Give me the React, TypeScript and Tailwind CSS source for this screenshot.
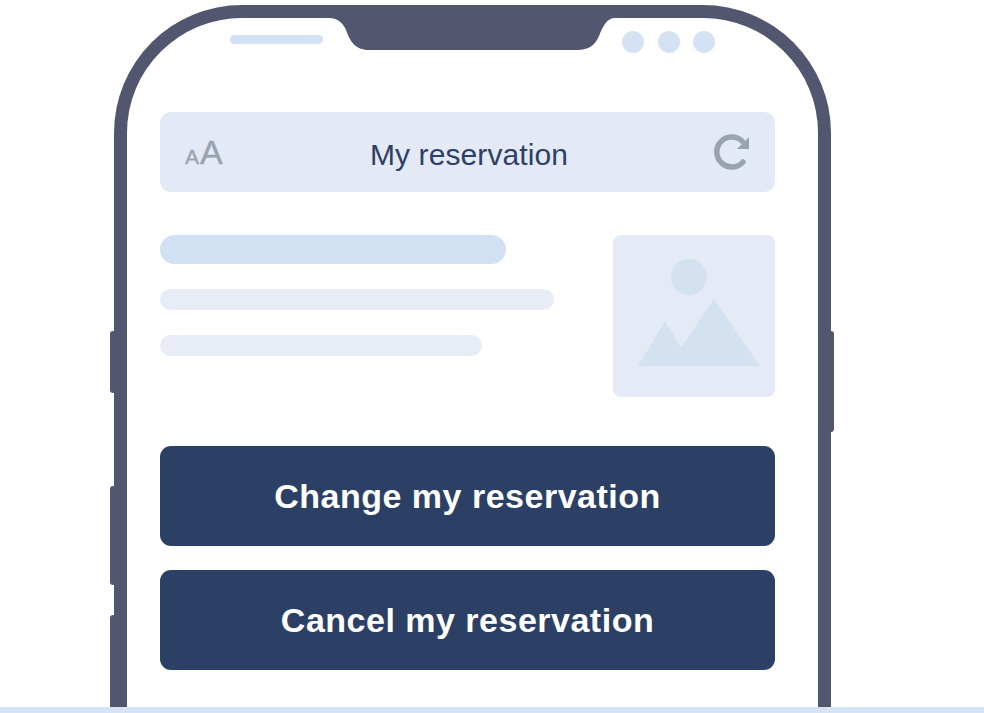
import React from 'react';

const App: React.FC = () => {
  return (
    <div className="relative h-[713px] w-[984px] overflow-hidden bg-white font-['Liberation_Sans',sans-serif] flex flex-col">
      <div className="flex-1 pt-[5px] pl-[114px]">
        {/* Phone body */}
        <div className="relative h-full w-[717px] rounded-t-[128px] border-[13px] border-b-0 border-[#53566f]">
          {/* Side buttons */}
          <div className="absolute -left-[17px] top-[313px] h-[62px] w-[4px] rounded-l-[3px] bg-[#53566f]" />
          <div className="absolute -left-[17px] top-[468px] h-[99px] w-[4px] rounded-l-[3px] bg-[#53566f]" />
          <div className="absolute -left-[17px] top-[597px] h-[92px] w-[4px] rounded-tl-[3px] bg-[#53566f]" />
          <div className="absolute -right-[16px] top-[313px] h-[101px] w-[3px] rounded-r-[3px] bg-[#53566f]" />

          {/* Notch */}
          <svg className="absolute left-[200px] -top-px" width="290" height="34" viewBox="0 -1 290 34">
            <path d="M0 -1 L0 0 L2 0 C11 0 16 5 19 12 C23 23 28 32 42 32 L250 32 C262 32 268 27 272 18 C276 8 280 0 288 0 L288 -1 Z" fill="#53566f" />
          </svg>

          <div className="flex h-full flex-col pl-[33px] pr-[43px]">
            {/* Status bar */}
            <div className="relative h-[94px] shrink-0">
              <div className="absolute left-[70px] top-[17px] h-[9px] w-[93px] rounded-full bg-[#d2e1f3]" />
              <div className="absolute left-[462px] top-[13px] flex gap-[13.5px]">
                <div className="h-[22px] w-[22px] rounded-full bg-[#d5e2f3]" />
                <div className="h-[22px] w-[22px] rounded-full bg-[#d5e2f3]" />
                <div className="h-[22px] w-[22px] rounded-full bg-[#d5e2f3]" />
              </div>
            </div>

            {/* Address bar */}
            <div className="flex h-[80px] w-[615px] shrink-0 items-center justify-between rounded-[11px] bg-[#e4eaf5] pl-[25px] pr-[24px]">
              <div className="flex w-[40px] items-baseline text-[#9aa3b1] [-webkit-text-stroke:0.4px_#9aa3b1]">
                <span className="text-[21px] leading-none">A</span>
                <span className="ml-px text-[34px] leading-none">A</span>
              </div>
              <span className="pt-[5px] text-[30px] leading-none tracking-[0.1px] text-[#2e4068]">My reservation</span>
              <svg className="translate-x-px translate-y-px" width="38" height="38" viewBox="0 0 38 38">
                <path d="M29 28 A15 15 0 1 1 28 7" fill="none" stroke="#9aa3b1" strokeWidth="5.5" strokeLinecap="round" />
                <path d="M35 3 L35 15 L23 15 Z" fill="#9aa3b1" />
              </svg>
            </div>

            {/* Content card */}
            <div className="mt-[43px] flex w-[615px] shrink-0 justify-between">
              <div className="flex flex-col">
                <div className="h-[29px] w-[346px] rounded-full bg-[#d2e0f3]" />
                <div className="mt-[25px] h-[21px] w-[394px] rounded-full bg-[#e8ecf6]" />
                <div className="mt-[25px] h-[21px] w-[322px] rounded-full bg-[#e8ecf6]" />
              </div>
              <div className="flex h-[162px] w-[162px] items-center justify-center rounded-[8px] bg-[#e4eaf6]">
                <svg width="162" height="162" viewBox="0 0 162 162">
                  <circle cx="76" cy="42" r="18" fill="#d3e1f1" />
                  <path d="M25 131 L52 86 L68 113 L101 64 L147 131 Z" fill="#d3e1f1" />
                </svg>
              </div>
            </div>

            {/* Actions */}
            <div className="mt-[49px] flex w-[615px] shrink-0 flex-col gap-[24px]">
              <button className="flex h-[100px] items-center justify-center rounded-[11px] bg-[#2c4066] text-[34px] font-bold tracking-[0.5px] text-white">
                Change my reservation
              </button>
              <button className="flex h-[100px] items-center justify-center rounded-[11px] bg-[#2c4066] text-[34px] font-bold tracking-[0.5px] text-white">
                Cancel my reservation
              </button>
            </div>
          </div>
        </div>
      </div>

      {/* Ground line */}
      <div className="h-[6px] shrink-0 bg-[#d5e3f4]" />
    </div>
  );
};

export default App;
